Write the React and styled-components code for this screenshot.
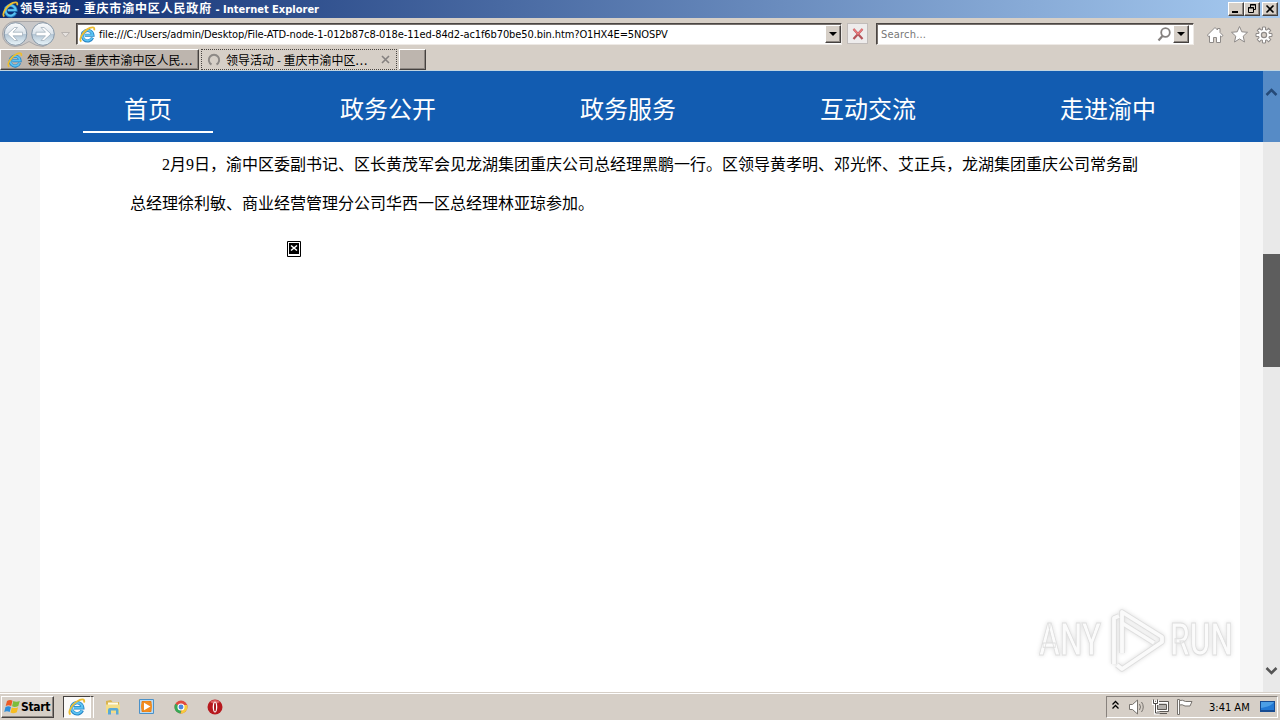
import styled, { createGlobalStyle, css } from "styled-components";

const navLinks = ["首页", "政务公开", "政务服务", "互动交流", "走进渝中"];

export default function App() {
  return (
    <>
      <GlobalStyle />
      <Screen>
        <TitleBar>
          <IeIcon size={17} />
          <Title>
            领导活动 - 重庆市渝中区人民政府 <Latin>- Internet Explorer</Latin>
          </Title>
          <WindowButtons>
            <WindowButton>
              <svg width="12" height="10"><path d="M2 8h6" stroke="#000" strokeWidth="2" /></svg>
            </WindowButton>
            <WindowButton>
              <svg width="12" height="10" fill="none" stroke="#000">
                <path d="M4.500 3V.5h5v5H8M4 1h6M2 4h6" />
                <path d="M2.500 3.500h5v5h-5z" />
              </svg>
            </WindowButton>
            <WindowButton $gap>
              <svg width="12" height="10"><path d="M2.500 1.500l7 7m0-7l-7 7" stroke="#000" strokeWidth="1.600" /></svg>
            </WindowButton>
          </WindowButtons>
        </TitleBar>

        <AddressRow>
          <HistoryButtons />
          <AddressField>
            <IeIcon size={17} />
            <Url>file:///C:/Users/admin/Desktop/File-ATD-node-1-012b87c8-018e-11ed-84d2-ac1f6b70be50.bin.htm?O1HX4E=5NOSPV</Url>
            <DropButton />
          </AddressField>
          <StopButton>
            <svg width="14" height="14">
              <path d="M2.500 2l9 10M11.500 2l-9 10" stroke="#b5545a" strokeWidth="2.200" />
              <path d="M2.500 2L7 7l4.500-5" stroke="#ee7b7d" strokeWidth="1.200" fill="none" />
            </svg>
          </StopButton>
          <SearchField>
            <SearchText>Search...</SearchText>
            <SearchGlass width="15" height="15" fill="none" stroke="#85817f">
              <circle cx="8.500" cy="5.500" r="4.300" strokeWidth="1.800" />
              <path d="M5.500 9L1.500 13.500" strokeWidth="2.200" />
            </SearchGlass>
            <DropButton />
          </SearchField>
          <CommandIcons />
        </AddressRow>

        <TabRow>
          <Tab $width={199}>
            <IeIcon size={16} />
            <TabLabel>领导活动 - 重庆市渝中区人民<Dots>...</Dots></TabLabel>
          </Tab>
          <Tab $width={196} $active>
            <svg width="16" height="16" fill="none" stroke="#8d8986" strokeWidth="2">
              <path d="M5.500 12.500A5.200 5.200 0 1 1 10.500 12.500" />
            </svg>
            <TabLabel>领导活动 - 重庆市渝中区<Dots>...</Dots></TabLabel>
            <TabClose width="9" height="9"><path d="M1 1l7 7m0-7l-7 7" stroke="#858180" strokeWidth="1.600" /></TabClose>
          </Tab>
          <NewTab />
        </TabRow>

        <Viewport>
          <Document>
            <SiteNav>
              {navLinks.map((label, i) => (
                <SiteNavItem key={label}>
                  <SiteNavLabel $active={i === 0}>{label}</SiteNavLabel>
                </SiteNavItem>
              ))}
            </SiteNav>
            <Article>
              <Paragraph>
                2月9日，渝中区委副书记、区长黄茂军会见龙湖集团重庆公司总经理黑鹏一行。区领导黄孝明、邓光怀、艾正兵，龙湖集团重庆公司常务副
                <br />
                总经理徐利敏、商业经营管理分公司华西一区总经理林亚琼参加。
              </Paragraph>
              <BrokenImage width="14" height="16">
                <path d="M.5.5h13v15H.5z" fill="#fff" stroke="#000" />
                <path d="M2 2h10v11H2z" />
                <path d="M4 4.500l6 5m0-5l-6 5" stroke="#fff" strokeWidth="1.600" />
              </BrokenImage>
            </Article>
            <Watermark />
          </Document>
          <ScrollBar>
            <ScrollHead><Chevron up /></ScrollHead>
            <ScrollThumb />
            <ScrollTail><Chevron /></ScrollTail>
          </ScrollBar>
        </Viewport>

        <TaskBar>
          <StartButton>
            <WindowsFlag />
            Start
          </StartButton>
          <TaskButton><IeIcon size={18} /></TaskButton>
          <TaskEdge />
          <QuickLaunch>
            <FolderIcon />
            <PlayerIcon />
            <ChromeIcon />
            <OperaIcon />
          </QuickLaunch>
          <Tray>
            <TrayIcons />
            <Clock>3:41 AM</Clock>
            <DesktopIcon />
          </Tray>
        </TaskBar>
      </Screen>
    </>
  );
}

function IeIcon({ size }) {
  return (
    <svg width={size} height={size} viewBox="0 0 18 18" fill="none">
      <path d="M14.300 12.400A5.600 5.600 0 1 1 14.700 9.800H6" stroke="#2583c4" strokeWidth="3.400" />
      <path d="M14 12.400A5.400 5.400 0 1 1 14.500 9.700H6" stroke="#5cc3f2" strokeWidth="2" />
      <path d="M2.500 16.500C-1 14.500 4.500 5 11.500 2c3.800-1.500 5.300-.2 4.500 2.500" stroke="#edbd2f" strokeWidth="1.900" />
    </svg>
  );
}

function HistoryButtons() {
  return (
    <svg width="76" height="30" viewBox="0 0 76 30">
      <defs>
        <linearGradient id="disc" x2="0" y2="1">
          <stop stopColor="#fafbfc" />
          <stop offset=".48" stopColor="#dbe3ea" />
          <stop offset=".52" stopColor="#b4c6d5" />
          <stop offset="1" stopColor="#e9f5fa" />
        </linearGradient>
      </defs>
      <path d="M15 2.500h28a13 13 0 0 1 0 25q-7 0-14-5-7 5-14 5a12.500 12.500 0 0 1 0-25z" fill="#c9c8c9" stroke="#aaa8a9" />
      {[15.500, 43].map((x) => (
        <circle key={x} cx={x} cy="15" r="11.300" fill="url(#disc)" stroke="#8798a8" />
      ))}
      <g fill="#fff" stroke="#a3b1bd" strokeWidth=".8">
        <path d="M7.500 15l7-6.500h3l-4.500 4.700h9.500v3.600H13l4.500 4.700h-3z" />
        <path d="M51 15l-7-6.500h-3l4.500 4.700H36v3.600h9.500L41 21.500h3z" />
      </g>
      <path d="M61.500 13.500h8l-4 4.500z" fill="#e6e2df" stroke="#b8b3af" />
    </svg>
  );
}

const gearTeeth = [0, 45, 90, 135, 180, 225, 270, 315];

function CommandIcons() {
  return (
    <CommandSvg width="70" height="22" fill="#fff" stroke="#8e8a88">
      <path d="M1.500 12L9 4.500l2.500 2.500V5.500h2.500v4l3 3-1.500 1.200-1-.8v6.600h-4v-5h-3v5h-4v-6.500l-1 .7z" />
      <path d="M33.500 3.500l2.300 5.300 5.700.5-4.300 3.900 1.300 5.800-5-3.100-5 3.100 1.300-5.800-4.300-3.900 5.700-.5z" />
      {gearTeeth.map((angle) => (
        <path key={angle} d="M56.500 7V4h3v3" transform={`rotate(${angle} 58 12)`} />
      ))}
      <circle cx="58" cy="12" r="5.600" />
      {gearTeeth.map((angle) => (
        <path key={angle} d="M57 8V5h2v3" stroke="none" transform={`rotate(${angle} 58 12)`} />
      ))}
      <circle cx="58" cy="12" r="2.600" fill="#d6cec6" strokeWidth="1.200" />
    </CommandSvg>
  );
}

function Chevron({ up }) {
  return (
    <svg width="13" height="10" fill="none" stroke={up ? "#254a78" : "#555"} strokeWidth="2.500">
      <path d={up ? "M1.500 8L6.500 3l5 5" : "M1.500 2l5 5 5-5"} />
    </svg>
  );
}

function Watermark() {
  return (
    <Mark>
      <MarkWord>ANY</MarkWord>
      <MarkLogo width="60" height="66" viewBox="0 0 60 66" fill="none" strokeLinejoin="round">
        <g stroke="#dedede" strokeWidth="5.500">
          <path d="M6 57V11l5-2M14 46V5l40 25v5L14 62l-5-4" />
          <path d="M14 16l32 20" />
        </g>
        <g stroke="#fafafa" strokeWidth="3.800">
          <path d="M6 57V11l5-2M14 46V5l40 25v5L14 62l-5-4" />
          <path d="M14 16l32 20" />
        </g>
      </MarkLogo>
      <MarkWord>RUN</MarkWord>
    </Mark>
  );
}

function WindowsFlag() {
  return (
    <svg width="17" height="16" viewBox="0 0 17 16">
      <path d="M3 2q3-2 5.500-.3L7.200 7Q4.500 5.500 1.700 7z" fill="#ed5b24" />
      <path d="M9.300 2q3 1.600 6.500 0l-1.500 5q-3.500 1.700-6.200.3z" fill="#7cbd3c" />
      <path d="M1.500 8q3-1.600 5.500 0l-1.300 5Q3 11.500.2 13z" fill="#2e8edb" />
      <path d="M7.800 8.400q3 1.500 6.300-.2l-1.300 5q-3.500 1.700-6.300.3z" fill="#f7bd22" />
    </svg>
  );
}

function FolderIcon() {
  return (
    <svg width="18" height="18">
      <path d="M2 3l5-1 1.500 2H15v10H2z" fill="#d9b451" />
      <path d="M4 4.500h10V8H4z" fill="#fffbe6" />
      <path d="M2 6.500h14v8.500H2z" fill="#f3dd88" />
      <path d="M4 16.500V12q0-2 2-2h6.500q2 0 2 2v4.500H12v-4H7v4z" fill="#59a9d6" />
    </svg>
  );
}

function PlayerIcon() {
  return (
    <svg width="18" height="18">
      <path d="M1.500 1.500h14v14h-14z" fill="#b9dcf5" stroke="#4b91c8" />
      <path d="M4 3.500h9v10H4z" fill="#f18c20" stroke="#e57c15" strokeLinejoin="round" />
      <circle cx="8.500" cy="8.500" r="5.500" fill="#f18c20" />
      <path d="M6 4.800l6.500 3.700L6 12.200z" fill="#fff" />
    </svg>
  );
}

function ChromeIcon() {
  return (
    <svg width="18" height="18" viewBox="0 0 18 18">
      <circle cx="9" cy="9" r="6.500" fill="#e04a3f" />
      <path d="M3.300 5.800L9 9l-.2 6.500A6.500 6.500 0 0 1 3.300 5.800z" fill="#37a956" />
      <path d="M9 7h6.100A6.500 6.500 0 0 1 8.500 15.500L11 9z" fill="#f6cb3c" />
      <circle cx="9" cy="9" r="3" fill="#4b86df" stroke="#fff" strokeWidth="1.100" />
    </svg>
  );
}

function OperaIcon() {
  return (
    <svg width="18" height="18">
      <circle cx="9" cy="9" r="7.500" fill="#b7191e" />
      <path d="M4 4a7 7 0 0 1 10 0q-5 3-10 0z" fill="#dc6464" />
      <ellipse cx="9" cy="9" rx="2.300" ry="5.500" fill="#fff" />
      <ellipse cx="9" cy="9" rx="1" ry="4.500" fill="#a7181b" />
    </svg>
  );
}

function TrayIcons() {
  return (
    <TraySvg width="86" height="20" fill="none" stroke="#77736e">
      <path d="M2.500 7.500l3-3 3 3M2.500 11.500l3-3 3 3" stroke="#000" strokeWidth="1.300" />
      <path d="M19.500 7.500h3l5-4.500v14l-5-4.500h-3z" fill="#fff" />
      <path d="M29.500 7q2 3 0 6M31.500 5q3.500 5 0 10" />
      <path d="M46.500 5.500h11v8h-11z" fill="#b4b1ad" stroke="#fff" strokeWidth="2" />
      <path d="M45.500 4.500h13v10h-13zM47.500 7.500h9v5h-9zM49 16.500h8" stroke="#5c5955" />
      <path d="M43.500 3v3.500h4V3M45.500 7v9h4" stroke="#fff" strokeWidth="3" />
      <path d="M43.500 2.500v4h4v-4M45.500 7v9h4" stroke="#4e4b48" />
      <path d="M67.500 17.500v-15h2v15z" fill="#fff" />
      <path d="M69.500 3.500q3-1 6 1h6.500l-2 4.500h-5q-3-2-5.500-1z" fill="#fff" />
    </TraySvg>
  );
}

function DesktopIcon() {
  return (
    <svg width="18" height="16">
      <path d="M1 2h15v11H1z" fill="#174b91" />
      <path d="M2 3h13v8H2z" fill="#2379d4" />
      <path d="M2 3h13q-2 4-13 6z" fill="#4c9fe6" />
    </svg>
  );
}

const GlobalStyle = createGlobalStyle`
  * {
    box-sizing: border-box;
  }

  body {
    margin: 0;
    overflow: hidden;
    font-family: "DejaVu Sans Condensed", "DejaVu Sans", "Noto Sans CJK SC", sans-serif;
    font-size: 11px;
    color: #000;
  }

  svg {
    display: block;
    flex-shrink: 0;
  }
`;

const raised = css`
  background: #d6cfc7;
  border: 1px solid;
  border-color: #fff #45413f #45413f #fff;
  box-shadow: inset -1px -1px #8c8681;
`;

const Screen = styled.div`
  width: 1280px;
  height: 720px;
  display: flex;
  flex-direction: column;
  overflow: hidden;
  background: #d6cfc7;
`;

const TitleBar = styled.header`
  height: 18px;
  padding: 0 2px;
  display: flex;
  align-items: center;
  background: linear-gradient(90deg, #0c2b70 0%, #a6caf0 100%);
`;

const Title = styled.div`
  margin-left: 1px;
  color: #fff;
  font-family: "Noto Sans CJK SC", sans-serif;
  font-size: 12px;
  font-weight: 700;
  letter-spacing: 0.83px;
  line-height: 18px;
  white-space: pre;
`;

const Latin = styled.span`
  font-family: "DejaVu Sans Condensed", "DejaVu Sans", sans-serif;
  font-size: 11px;
  letter-spacing: 0;
`;

const WindowButtons = styled.div`
  margin-left: auto;
  display: flex;
`;

const WindowButton = styled.div`
  ${raised}
  width: 16px;
  height: 14px;
  margin-left: ${({ $gap }) => ($gap ? "2px" : 0)};
  padding: 1px;
`;

const AddressRow = styled.div`
  height: 31px;
  display: flex;
  align-items: center;
`;

const field = css`
  height: 22px;
  display: flex;
  align-items: center;
  background: #fff;
  border: 1px solid;
  border-color: #4b4643 #eeeae6 #eeeae6 #4b4643;
  box-shadow: inset 1px 1px #77716d;
`;

const AddressField = styled.div`
  ${field}
  width: 766px;
  padding: 1px 0 0 2px;
`;

const Url = styled.div`
  flex: 1;
  margin-left: 3px;
  letter-spacing: -0.1px;
  white-space: nowrap;
`;

const DropButton = styled.div`
  ${raised}
  width: 16px;
  height: 18px;
  display: flex;
  align-items: center;
  justify-content: center;

  &::after {
    content: "";
    border: 4px solid transparent;
    border-top-color: #000;
    border-bottom: 0;
  }
`;

const StopButton = styled.div`
  width: 21px;
  height: 21px;
  margin: 0 8px 0 5px;
  display: flex;
  align-items: center;
  justify-content: center;
  background: #eeecec;
  border: 1px solid #c1bcba;
`;

const SearchField = styled.div`
  ${field}
  width: 318px;
  padding: 1px 4px 0 4px;
`;

const SearchText = styled.div`
  flex: 1;
  color: #777;
  letter-spacing: 0.2px;
`;

const SearchGlass = styled.svg`
  margin-right: 1px;
`;

const CommandSvg = styled.svg`
  margin-left: 12px;
`;

const TabRow = styled.div`
  height: 22px;
  display: flex;
  align-items: flex-start;
  gap: 2px;
  border-bottom: 1px solid #c0d4e0;
`;

const Tab = styled.div`
  ${raised}
  width: ${({ $width }) => $width}px;
  height: 21px;
  padding-left: 6px;
  display: flex;
  align-items: center;
  background: #bdb5ae;

  ${({ $active }) =>
    $active &&
    css`
      background: #d6cfc7;
      border: 1px dotted #474340;
      box-shadow: none;
      padding-left: 4px;
    `}
`;

const TabLabel = styled.div`
  margin-left: 4px;
  font-family: "Noto Sans CJK SC", sans-serif;
  font-size: 12px;
  line-height: 18px;
  white-space: nowrap;
`;

const Dots = styled.span`
  letter-spacing: 0.9px;
`;

const TabClose = styled.svg`
  margin: 0 6px 0 auto;
`;

const NewTab = styled.div`
  ${raised}
  width: 27px;
  height: 21px;
  background: #bdb5ae;
`;

const Viewport = styled.main`
  height: 621px;
  display: flex;
  background: #f6f6f6;
`;

const Document = styled.div`
  position: relative;
  width: 1263px;
`;

const SiteNav = styled.nav`
  height: 71px;
  padding-left: 28px;
  display: flex;
  background: #125cb1;
`;

const SiteNavItem = styled.div`
  width: 240px;
  display: flex;
  justify-content: center;
`;

const SiteNavLabel = styled.div`
  width: 130px;
  height: 62px;
  padding-top: 19px;
  border-bottom: 2px solid ${({ $active }) => ($active ? "#fff" : "transparent")};
  color: #fff;
  font-family: "Noto Sans CJK SC", sans-serif;
  font-size: 24px;
  line-height: 36px;
  text-align: center;
`;

const Article = styled.article`
  width: 1200px;
  height: 550px;
  margin-left: 40px;
  padding: 3px 90px 0;
  background: #fff;
`;

const Paragraph = styled.p`
  margin: 0;
  font-family: "Liberation Serif", "Noto Sans CJK SC", serif;
  font-size: 16px;
  line-height: 39px;
  text-indent: 32px;
  white-space: nowrap;
`;

const BrokenImage = styled.svg`
  margin: 18px 0 0 157px;
`;

const Mark = styled.div`
  position: absolute;
  left: 1039px;
  top: 536px;
  display: flex;
  align-items: center;
  filter: drop-shadow(0 0 2px #ddd);
`;

const MarkLogo = styled.svg`
  margin: 0 2px 0 4px;
`;

const MarkWord = styled.span`
  width: 65px;
  color: #fbfbfb;
  font-family: Roboto, sans-serif;
  font-size: 45px;
  font-weight: 500;
  line-height: 50px;
  -webkit-text-stroke: 1px #dedede;
  transform: scaleX(0.7);
  transform-origin: left;
`;

const ScrollBar = styled.div`
  width: 17px;
  background: #e9e9e9;
`;

const ScrollHead = styled.div`
  height: 71px;
  padding: 16px 0 0 2px;
  background: #568bc6;
`;

const ScrollThumb = styled.div`
  height: 113px;
  margin-top: 112px;
  background: #5d5d5d;
`;

const ScrollTail = styled.div`
  padding: 299px 0 0 2px;
`;

const TaskBar = styled.footer`
  height: 28px;
  padding: 1px 2px 0 1px;
  display: flex;
  align-items: center;
  border-top: 1px solid #d6cfc7;
  box-shadow: inset 0 1px #fff;
`;

const StartButton = styled.div`
  ${raised}
  width: 53px;
  height: 22px;
  padding-left: 2px;
  display: flex;
  align-items: center;
  font-size: 12px;
  font-weight: 700;
  letter-spacing: -0.3px;
`;

const TaskButton = styled.div`
  width: 28px;
  height: 22px;
  margin-left: 9px;
  display: flex;
  align-items: center;
  justify-content: center;
  background: #fbfaf9;
  border: 1px solid;
  border-color: #45413f #fff #fff #45413f;
`;

const TaskEdge = styled.div`
  width: 3px;
  height: 22px;
  border-top: 1px solid #45413f;
  border-right: 1px solid #fff;
`;

const QuickLaunch = styled.div`
  margin-left: 10px;
  display: flex;
  gap: 16px;
`;

const Tray = styled.div`
  width: 172px;
  height: 22px;
  margin-left: auto;
  padding-left: 3px;
  display: flex;
  align-items: center;
  border: 1px solid;
  border-color: #88827d #fff #fff #88827d;
`;

const TraySvg = styled.svg`
  margin-right: 13px;
`;

const Clock = styled.div`
  width: 50px;
  white-space: nowrap;
`;
